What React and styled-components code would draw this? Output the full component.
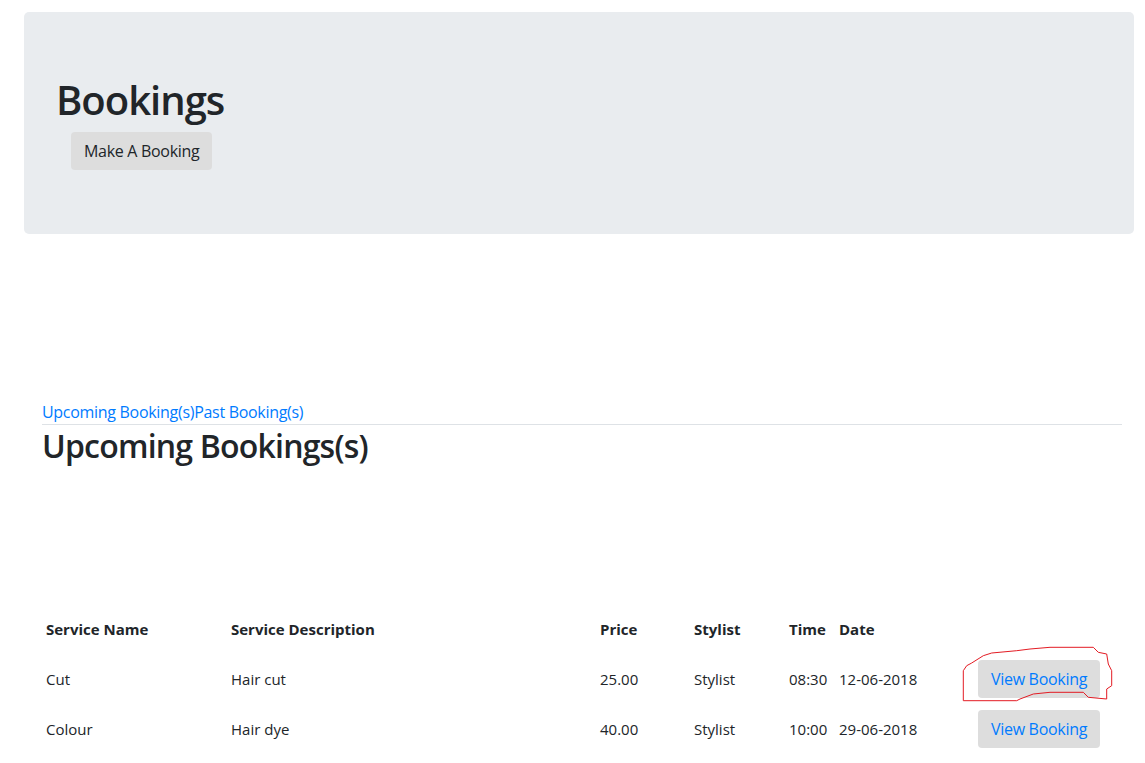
import React from "react";
import styled, { createGlobalStyle } from "styled-components";

const Global = createGlobalStyle`
  html, body { margin: 0; padding: 0; background: #fff; }
  body {
    font-family: "Open Sans", "Noto Sans", "Liberation Sans", sans-serif;
    font-size: 16px;
    line-height: 1.5;
    color: #212529;
  }
  * { box-sizing: border-box; }
`;

const Page = styled.div`
  padding: 12px 11px 40px 24px;
`;

const Jumbotron = styled.section`
  background: #e9ecef;
  border-radius: 5px;
  padding: 64px 32px;
`;

const Title = styled.h1`
  margin: 0 0 8px 0;
  font-size: 40px;
  font-weight: 600;
  line-height: 1.2;
  letter-spacing: -1px;
`;

const GreyButton = styled.button`
  display: inline-block;
  font-family: inherit;
  font-size: 16px;
  line-height: 24px;
  padding: 6px 12px;
  border: 1px solid transparent;
  border-radius: 4px;
  background: #dddddd;
  color: ${(p) => (p.$link ? "#007bff" : "#212529")};
  cursor: pointer;
  margin-left: ${(p) => (p.$indent ? "15px" : "0")};
  letter-spacing: -0.3px;
`;

const Section = styled.section`
  margin: 166px 12px 0 18px;
`;

const Tabs = styled.nav`
  display: flex;
  border-bottom: 1px solid #dee2e6;
`;

const TabLink = styled.a`
  color: #007bff;
  text-decoration: none;
  font-size: 16px;
  line-height: 24px;
  letter-spacing: -0.3px;
  cursor: pointer;
`;

const SubTitle = styled.h2`
  margin: 2px 0 0 0;
  font-size: 32px;
  font-weight: 600;
  line-height: 1.2;
  letter-spacing: -0.8px;
`;

const Table = styled.table`
  margin-top: 139px;
  width: 100%;
  border-collapse: collapse;
  table-layout: fixed;
`;

const HeadCell = styled.th`
  text-align: left;
  font-weight: 700;
  font-size: 15px;
  height: 50px;
  padding: 0 4px;
  vertical-align: middle;
`;

const Cell = styled.td`
  font-size: 15px;
  height: 50px;
  padding: 0 4px;
  vertical-align: middle;
  white-space: nowrap;
`;

const Marked = styled.span`
  position: relative;
  display: inline-block;
`;

const Scribble = styled.svg`
  position: absolute;
  left: -16px;
  top: -14px;
  width: 152px;
  height: 56px;
  pointer-events: none;
  overflow: visible;
`;

const bookings = [
  { name: "Cut", desc: "Hair cut", price: "25.00", stylist: "Stylist", time: "08:30", date: "12-06-2018", marked: true },
  { name: "Colour", desc: "Hair dye", price: "40.00", stylist: "Stylist", time: "10:00", date: "29-06-2018" },
];

const widths = [185, 369, 94, 95, 50, 139, 148];

export default function App() {
  return (
    <>
      <Global />
      <Page>
        <Jumbotron>
          <Title>Bookings</Title>
          <GreyButton $indent>Make A Booking</GreyButton>
        </Jumbotron>
        <Section>
          <Tabs>
            <TabLink>Upcoming Booking(s)</TabLink>
            <TabLink>Past Booking(s)</TabLink>
          </Tabs>
          <SubTitle>Upcoming Bookings(s)</SubTitle>
          <Table>
            <colgroup>
              {widths.map((w, i) => (
                <col key={i} style={{ width: w }} />
              ))}
            </colgroup>
            <thead>
              <tr>
                <HeadCell>Service Name</HeadCell>
                <HeadCell>Service Description</HeadCell>
                <HeadCell>Price</HeadCell>
                <HeadCell>Stylist</HeadCell>
                <HeadCell>Time</HeadCell>
                <HeadCell>Date</HeadCell>
                <HeadCell />
              </tr>
            </thead>
            <tbody>
              {bookings.map((b) => (
                <tr key={b.name}>
                  <Cell>{b.name}</Cell>
                  <Cell>{b.desc}</Cell>
                  <Cell>{b.price}</Cell>
                  <Cell>{b.stylist}</Cell>
                  <Cell>{b.time}</Cell>
                  <Cell>{b.date}</Cell>
                  <Cell>
                    <Marked>
                      <GreyButton $link>View Booking</GreyButton>
                      {b.marked && (
                        <Scribble viewBox="0 0 152 56">
                          <polyline
                            fill="none"
                            stroke="#e31b23"
                            strokeWidth="1"
                            points="1.3,54.7 1.3,24.7 4.7,19.7 9.7,17 21.3,9.7 29.7,7 54.7,4.7 68,3 88,1.3 131.3,1.3 136.3,6.3 144.7,8 146.3,18 149.7,24.7 149.7,39.7 144.7,43 144.7,53 126.3,51.3 121.3,46.3 88,46.3 71.3,48 58,53 54.7,54.7 1.3,54.7"
                          />
                        </Scribble>
                      )}
                    </Marked>
                  </Cell>
                </tr>
              ))}
            </tbody>
          </Table>
        </Section>
      </Page>
    </>
  );
}
